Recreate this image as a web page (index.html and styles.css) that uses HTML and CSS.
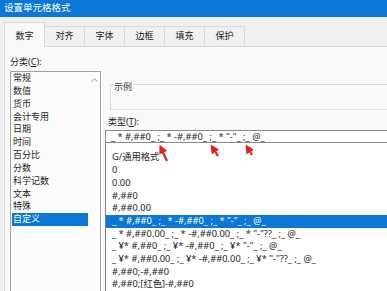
FILE: index.html
```html
<!DOCTYPE html>
<html>
<head>
<meta charset="utf-8">
<link rel="stylesheet" href="styles.css">
</head>
<body>
<div class="window">
  <div class="titlebar">设置单元格格式</div>
  <div class="tabs">
    <div class="tab active">数字</div>
    <div class="tab">对齐</div>
    <div class="tab">字体</div>
    <div class="tab">边框</div>
    <div class="tab">填充</div>
    <div class="tab">保护</div>
  </div>
  <div class="panel">
    <div class="col-left">
      <div class="label">分类(<u>C</u>):</div>
      <div class="listbox">
        <ul class="items">
          <li>常规</li>
          <li>数值</li>
          <li>货币</li>
          <li>会计专用</li>
          <li>日期</li>
          <li>时间</li>
          <li>百分比</li>
          <li>分数</li>
          <li>科学记数</li>
          <li>文本</li>
          <li>特殊</li>
          <li class="selected">自定义</li>
        </ul>
        <div class="scrollbar">
          <svg class="chev" width="7" height="4" viewBox="0 0 7 4"><path d="M0.5 3.5 L3.5 0.8 L6.5 3.5" fill="none" stroke="#a6a6a6" stroke-width="1"/></svg>
        </div>
      </div>
    </div>
    <div class="col-right">
      <fieldset class="sample"><legend>示例</legend></fieldset>
      <div class="label label-type">类型(<u>T</u>):</div>
      <div class="input">_ * #,##0_ ;_ * -#,##0_ ;_ * "-"_ ;_ @_ </div>
      <ul class="typelist">
        <li>G/通用格式</li>
        <li>0</li>
        <li>0.00</li>
        <li>#,##0</li>
        <li>#,##0.00</li>
        <li class="selected">_ * #,##0_ ;_ * -#,##0_ ;_ * "-"_ ;_ @_ </li>
        <li>_ * #,##0.00_ ;_ * -#,##0.00_ ;_ * "-"??_ ;_ @_ </li>
        <li>_ ¥* #,##0_ ;_ ¥* -#,##0_ ;_ ¥* "-"_ ;_ @_ </li>
        <li>_ ¥* #,##0.00_ ;_ ¥* -#,##0.00_ ;_ ¥* "-"??_ ;_ @_ </li>
        <li>#,##0;-#,##0</li>
        <li>#,##0;[红色]-#,##0</li>
      </ul>
    </div>
  </div>
  <svg class="arrows" width="387" height="291" viewBox="0 0 387 291">
    <defs>
      <marker id="ah" viewBox="0 0 10 10" refX="6" refY="5" markerWidth="4" markerHeight="4" orient="auto">
        <path d="M0,0 L10,5 L0,10 z" fill="#e3241b"/>
      </marker>
    </defs>
    <line x1="167" y1="161" x2="161" y2="148" stroke="#e3241b" stroke-width="2.2" marker-end="url(#ah)"/>
    <line x1="218" y1="156" x2="212.5" y2="147.5" stroke="#e3241b" stroke-width="2.2" marker-end="url(#ah)"/>
    <line x1="252" y1="155" x2="247.5" y2="147.5" stroke="#e3241b" stroke-width="2.2" marker-end="url(#ah)"/>
  </svg>
</div>
</body>
</html>
```

FILE: styles.css
```css
html, body {
  margin: 0;
  padding: 0;
}
body {
  width: 387px;
  height: 291px;
  overflow: hidden;
  background: #f0f0f0;
  font-family: "Noto Sans", "Noto Sans CJK SC", sans-serif;
  font-size: 9px;
  color: #1e1e1e;
}
.window {
  position: relative;
  height: 291px;
  display: flex;
  flex-direction: column;
}
.titlebar {
  height: 17px;
  flex: none;
  background: #0a78d4;
  color: #fff;
  font-size: 9.5px;
  line-height: 15px;
  padding-left: 4px;
  box-sizing: border-box;
}
.tabs {
  flex: none;
  height: 29px;
  display: flex;
  align-items: flex-end;
  padding-left: 4px;
  box-sizing: border-box;
}
.tab {
  width: 41px;
  height: 20px;
  box-sizing: border-box;
  border: 1px solid #d9d9d9;
  border-bottom: none;
  margin-right: -1px;
  text-align: center;
  line-height: 18px;
  color: #222;
}
.tab.active {
  height: 25px;
  padding-top: 4px;
  background: #f9f9f9;
  margin-bottom: -1px;
  position: relative;
  z-index: 1;
}
.panel {
  flex: 1;
  display: flex;
  margin-left: 4px;
  background: #f9f9f9;
  border-top: 1px solid #d9d9d9;
  border-left: 1px solid #d9d9d9;
  padding: 9px 0 0 5px;
  min-height: 0;
}
.col-left {
  width: 91px;
  flex: none;
}
.label {
  line-height: 12px;
  height: 12px;
}
.listbox {
  margin-top: 3px;
  height: 230px;
  border: 1px solid #a3a3a3;
  display: flex;
  background: #fbfbfb;
}
.items {
  list-style: none;
  margin: 0;
  padding: 0 0 0 1px;
  width: 77px;
  box-sizing: border-box;
}
.items li {
  line-height: 12.85px;
  height: 12.85px;
  padding-left: 1px;
}
.items li.selected {
  background: #0a78d4;
  color: #fff;
}
.scrollbar {
  flex: 1;
  display: flex;
  justify-content: center;
  padding-top: 6px;
}
.chev {
  display: block;
}
.col-right {
  flex: 1;
  margin-left: 4px;
  min-width: 0;
  display: flex;
  flex-direction: column;
}
.sample {
  margin: 19px 0 0 5px;
  padding: 0;
  height: 42px;
  box-sizing: border-box;
  border: 1px solid #dcdcdc;
  border-right: none;
  min-width: 0;
}
.sample legend {
  margin-left: 2px;
  padding: 6px 1px 0;
  line-height: 12px;
  color: #444;
}
.label-type {
  margin-top: 6px;
  padding-left: 3px;
}
.input {
  margin-top: 2px;
  height: 13px;
  box-sizing: border-box;
  border: 1px solid #8a8a8a;
  border-right: none;
  background: #fff;
  padding-left: 5px;
  font-size: 9.3px;
  line-height: 11px;
  white-space: pre;
}
.typelist {
  list-style: none;
  margin: 0;
  padding: 8.5px 0 0 0;
  border-left: 1px solid #7f7f7f;
  background: #fff;
  flex: 1;
  font-size: 9.3px;
}
.typelist li {
  line-height: 12.7px;
  height: 12.7px;
  padding-left: 6px;
  white-space: pre;
}
.typelist li.selected {
  background: #0a78d4;
  color: #fff;
}
.arrows {
  position: absolute;
  left: 0;
  top: 0;
  pointer-events: none;
}
```
